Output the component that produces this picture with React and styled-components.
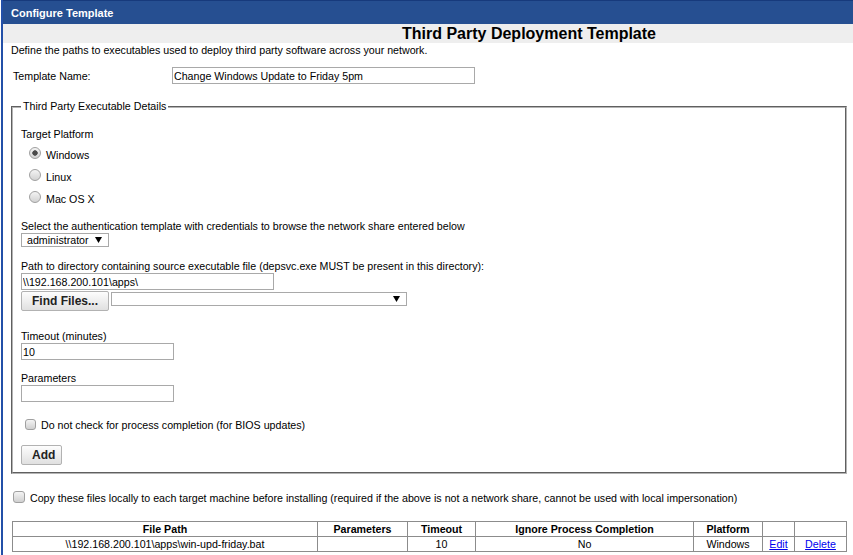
import React from "react"
import styled, { createGlobalStyle } from "styled-components"

const GlobalStyle = createGlobalStyle`
  html, body {
    margin: 0;
    padding: 0;
    background: #fff;
  }
  body {
    font-family: "Liberation Sans", Arial, sans-serif;
    font-size: 8pt;
    color: #000;
    overflow: hidden;
  }
`

const Panel = styled.div`
  margin-left: 1px;
  border-left: 2px solid #2350a8;
  min-height: 555px;
`

const TitleBar = styled.div`
  height: 21px;
  padding: 2px 0 0 8px;
  border-top: 1px solid #173a7c;
  background: #264f91;
  color: #fff;
  font-size: 11px;
  font-weight: bold;
  line-height: 21px;
`

const Heading = styled.h1`
  margin: 0;
  height: 19px;
  padding-left: 399px;
  background: #eeeeee;
  font-size: 16px;
  font-weight: bold;
  line-height: 19px;
`

const Line = styled.div`
  line-height: 13px;
  margin-top: ${p => p.$top || 0}px;
  padding-left: ${p => p.$left || 0}px;
`

const FieldRow = styled.div`
  display: flex;
  align-items: center;
  height: 17px;
  margin: 10px 0 0 10px;
`

const RowLabel = styled.label`
  width: 159px;
  margin-top: 2px;
  line-height: 13px;
`

const TextInput = styled.input`
  box-sizing: border-box;
  display: block;
  width: ${p => p.$w}px;
  height: 17px;
  margin: 0;
  padding: 0 1px;
  border: 1px solid #a9a9a9;
  background: #fff;
  color: #000;
  font: 8pt "Liberation Sans", Arial, sans-serif;
  outline: none;
`

const Group = styled.fieldset`
  margin: 16px 6px 0 8px;
  padding: 15px 8px 7px 8px;
  border: 2px groove #b4b4b4;
  min-width: 0;
`

const Legend = styled.legend`
  padding: 0 2px;
  line-height: 13px;
`

const RadioList = styled.div`
  margin: 6px 0 0 8px;
`

const OptionRow = styled.label`
  display: flex;
  align-items: flex-start;
  gap: 5px;
  height: ${p => p.$h || 22}px;
  margin: ${p => p.$margin || "0"};
  line-height: 13px;
`

const Radio = styled.input.attrs({ type: "radio" })`
  appearance: none;
  box-sizing: border-box;
  flex: none;
  width: 12px;
  height: 12px;
  margin: 0;
  border: 1px solid #a0a0a0;
  border-radius: 50%;
  background: linear-gradient(#f4f4f4, #d2d2d2);
  &:checked {
    background: radial-gradient(circle, #4a4a4a 0 2.4px, transparent 3px),
      linear-gradient(#f4f4f4, #d2d2d2);
  }
`

const OptionText = styled.span`
  margin-top: ${p => p.$top || 0}px;
`

const Checkbox = styled.input.attrs({ type: "checkbox" })`
  appearance: none;
  box-sizing: border-box;
  flex: none;
  width: ${p => p.$size || 11}px;
  height: ${p => p.$size || 11}px;
  margin: 0;
  border: 1px solid #a0a0a0;
  border-radius: 3px;
  background: linear-gradient(#f4f4f4, #d0d0d0);
`

const SelectBox = styled.div`
  box-sizing: border-box;
  display: flex;
  align-items: center;
  justify-content: space-between;
  width: ${p => p.$w}px;
  height: 14px;
  margin-top: ${p => p.$top || 0}px;
  padding: 0 6px 0 5px;
  border: 1px solid #a9a9a9;
  background: #fff;
  line-height: 13px;
`

const ButtonRow = styled.div`
  display: flex;
  align-items: flex-start;
  gap: 2px;
  margin-top: 1px;
`

const Button = styled.button`
  box-sizing: border-box;
  width: ${p => p.$w}px;
  height: 20px;
  margin: ${p => p.$margin || "0"};
  padding: 0 0 0 10px;
  border: 1px solid #b2b2b2;
  border-radius: 2px;
  background: linear-gradient(#fdfdfd, #e0e0e0);
  color: #222;
  font: bold 12px "Liberation Sans", Arial, sans-serif;
  text-align: left;
  white-space: nowrap;
`

const Table = styled.table`
  width: 834px;
  margin: 17px 0 0 9px;
  border-collapse: collapse;
  table-layout: fixed;

  th,
  td {
    height: 14px;
    padding: 0;
    border: 1px solid #8c8c8c;
    line-height: 14px;
    text-align: center;
    white-space: nowrap;
    overflow: hidden;
  }
  th {
    font-weight: bold;
  }
  a {
    color: #0000ee;
    text-decoration: underline;
  }
`

const Arrow = () => (
  <svg width="7" height="6" viewBox="0 0 7 6">
    <polygon points="0,0 7,0 3.5,6" fill="#000" />
  </svg>
)

const columns = [
  { title: "File Path", width: 305 },
  { title: "Parameters", width: 90 },
  { title: "Timeout", width: 68 },
  { title: "Ignore Process Completion", width: 218 },
  { title: "Platform", width: 69 },
  { title: "", width: 32 },
  { title: "", width: 52 },
]

const platforms = ["Windows", "Linux", "Mac OS X"]

export default function App() {
  return (
    <>
      <GlobalStyle />
      <Panel>
        <TitleBar>Configure Template</TitleBar>
        <Heading>Third Party Deployment Template</Heading>
        <Line $top={1} $left={8}>
          Define the paths to executables used to deploy third party software
          across your network.
        </Line>

        <FieldRow>
          <RowLabel>Template Name:</RowLabel>
          <TextInput $w={303} defaultValue="Change Windows Update to Friday 5pm" />
        </FieldRow>

        <Group>
          <Legend>Third Party Executable Details</Legend>
          <Line>Target Platform</Line>
          <RadioList>
            {platforms.map((name, i) => (
              <OptionRow key={name}>
                <Radio name="platform" defaultChecked={i === 0} />
                <OptionText $top={2}>{name}</OptionText>
              </OptionRow>
            ))}
          </RadioList>

          <Line $top={7}>
            Select the authentication template with credentials to browse the
            network share entered below
          </Line>
          <SelectBox $w={88}>
            <span>administrator</span>
            <Arrow />
          </SelectBox>

          <Line $top={13}>
            Path to directory containing source executable file (depsvc.exe
            MUST be present in this directory):
          </Line>
          <TextInput $w={253} defaultValue={"\\\\192.168.200.101\\apps\\"} />
          <ButtonRow>
            <Button $w={88}>Find Files...</Button>
            <SelectBox $w={296} $top={1}>
              <span />
              <Arrow />
            </SelectBox>
          </ButtonRow>

          <Line $top={19}>Timeout (minutes)</Line>
          <TextInput $w={153} defaultValue="10" />

          <Line $top={12}>Parameters</Line>
          <TextInput $w={153} defaultValue="" />

          <OptionRow $h={13} $margin="17px 0 0 4px">
            <Checkbox />
            <OptionText>Do not check for process completion (for BIOS updates)</OptionText>
          </OptionRow>

          <Button $w={41} $margin="13px 0 0 0">Add</Button>
        </Group>

        <OptionRow $h={13} $margin="17px 0 0 10px">
          <Checkbox $size={12} />
          <OptionText $top={1}>
            Copy these files locally to each target machine before installing
            (required if the above is not a network share, cannot be used with
            local impersonation)
          </OptionText>
        </OptionRow>

        <Table>
          <colgroup>
            {columns.map((c, i) => (
              <col key={i} style={{ width: c.width }} />
            ))}
          </colgroup>
          <thead>
            <tr>
              {columns.map((c, i) => (
                <th key={i}>{c.title}</th>
              ))}
            </tr>
          </thead>
          <tbody>
            <tr>
              <td>{"\\\\192.168.200.101\\apps\\win-upd-friday.bat"}</td>
              <td></td>
              <td>10</td>
              <td>No</td>
              <td>Windows</td>
              <td>
                <a href="#edit">Edit</a>
              </td>
              <td>
                <a href="#delete">Delete</a>
              </td>
            </tr>
          </tbody>
        </Table>
      </Panel>
    </>
  )
}
